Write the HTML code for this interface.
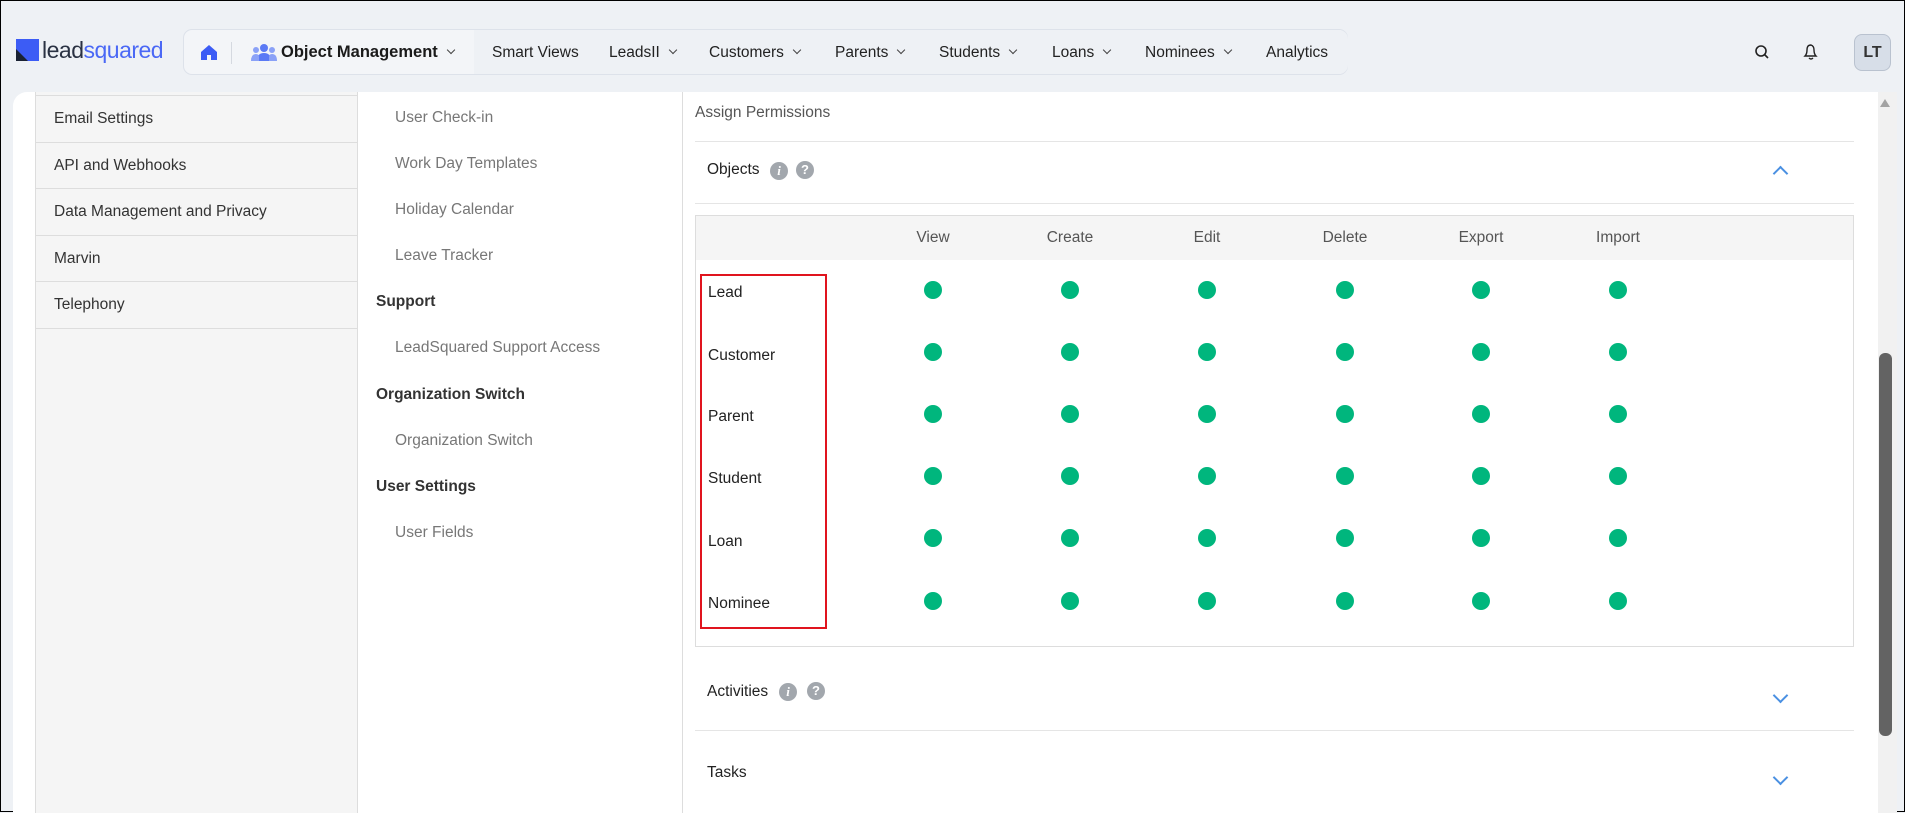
<!DOCTYPE html>
<html><head><meta charset="utf-8"><style>
*{box-sizing:border-box;margin:0;padding:0}
body{width:1905px;height:812px;overflow:hidden;background:#eef1f5;font-family:"Liberation Sans",sans-serif;position:relative;border:1px solid #000}
.abs{position:absolute}
.nav{left:182px;top:28px;width:1165px;height:46px;border:1px solid #dde2ea;border-radius:9px;background:#f3f5f8}
.ni{position:absolute;top:14px;font-size:15.5px;color:#222;white-space:nowrap}
.chev{display:inline-block;width:6px;height:6px;border-right:1.5px solid #444;border-bottom:1.5px solid #444;transform:rotate(45deg);margin-left:10px;position:relative;top:-4px}
.panel{left:12px;top:91px;width:1884px;height:721px;background:#fff;border-radius:14px 0 0 0}
.lc{left:34px;top:91px;width:323px;height:721px;background:#f5f5f5;border-left:1px solid #ddd;border-right:1px solid #ddd}
.li{position:absolute;left:0;width:321px;height:46.5px;border-bottom:1px solid #ddd;font-size:15.5px;color:#333;padding:14px 0 0 18px}
.mi{position:absolute;font-size:15.5px;color:#777}
.mh{position:absolute;font-size:15.5px;color:#333;font-weight:bold;left:375px}
.mid{left:357px;top:91px;width:325px;height:721px;border-right:1px solid #ddd}
.hd{position:absolute;font-size:15.5px;color:#555;text-align:center;width:100px;top:228px}
.rl{position:absolute;left:707px;font-size:15.5px;color:#222}
.dot{position:absolute;width:18px;height:18px;border-radius:50%;background:#00b67d}
.ic{position:absolute;width:18px;height:18px;border-radius:50%;background:#a2a7ad;color:#fff;font-size:13px;font-weight:bold;text-align:center;line-height:18px}
.ch{position:absolute;width:11px;height:11px;border-left:2px solid #4a90e2;border-top:2px solid #4a90e2}
</style></head><body>
<div class="abs" style="left:15px;top:38px;width:23px;height:22px;background:#3c5cf5"></div>
<div class="abs" style="left:15px;top:48px;width:0;height:0;border-left:12px solid #1a2233;border-top:12px solid transparent"></div>
<div class="abs" style="left:41px;top:36px;font-size:23px;letter-spacing:-0.5px;color:#2a3243">lead<span style="color:#4a68f5">squared</span></div>
<div class="abs nav">
 <svg class="abs" style="left:16px;top:14px" width="18" height="17" viewBox="0 0 18 17"><path d="M9 1 L17 8 V16 H11 V11 H7 V16 H1 V8 Z" fill="#3c5cf5"/></svg>
 <div class="abs" style="left:47px;top:12px;width:1px;height:22px;background:#d5d9e0"></div>
 <svg class="abs" style="left:67px;top:13px" width="26" height="19" viewBox="0 0 26 19"><circle cx="13" cy="5" r="4" fill="#5b7af5"/><circle cx="5" cy="7" r="3" fill="#8aa1f7"/><circle cx="21" cy="7" r="3" fill="#8aa1f7"/><path d="M6 18 Q6 10 13 10 Q20 10 20 18Z" fill="#5b7af5"/><path d="M0 18 Q0 11 5 11 Q8 11 8 14 V18Z M26 18 Q26 11 21 11 Q18 11 18 14 V18Z" fill="#8aa1f7"/></svg>
 <div class="ni" style="left:97px;font-weight:bold;font-size:16.5px;top:13px;color:#1a1a1a">Object Management<span class="chev"></span></div>
 <div class="abs" style="left:290px;top:0;width:874px;height:44px;background:#eef1f5;border-radius:0 9px 9px 0"></div>
 <div class="ni" style="left:308px">Smart Views</div>
 <div class="ni" style="left:425px">LeadsII<span class="chev"></span></div>
 <div class="ni" style="left:525px">Customers<span class="chev"></span></div>
 <div class="ni" style="left:651px">Parents<span class="chev"></span></div>
 <div class="ni" style="left:755px">Students<span class="chev"></span></div>
 <div class="ni" style="left:868px">Loans<span class="chev"></span></div>
 <div class="ni" style="left:961px">Nominees<span class="chev"></span></div>
 <div class="ni" style="left:1082px">Analytics</div>
</div>
<svg class="abs" style="left:1753px;top:43px" width="16" height="16" viewBox="0 0 16 16"><circle cx="7" cy="7" r="5" fill="none" stroke="#222" stroke-width="1.6"/><path d="M11 11 L14 14" stroke="#222" stroke-width="1.6"/></svg>
<svg class="abs" style="left:1801px;top:42px" width="16" height="18" viewBox="0 0 16 18"><path d="M3 13 Q5 11 5 7 Q5 2 9 2 Q12 3 12 7 Q12 11 14 13 Z M7 15 Q9 17 11 15" fill="none" stroke="#222" stroke-width="1.4"/></svg>
<div class="abs" style="left:1853px;top:33px;width:37px;height:37px;border:1px solid #b9c2cf;border-radius:8px;background:#d7dee8;font-size:16px;font-weight:bold;color:#333;text-align:center;line-height:35px">LT</div>

<div class="abs panel"></div>
<div class="abs lc">
 <div class="li" style="top:4px">Email Settings</div>
 <div class="li" style="top:50.5px">API and Webhooks</div>
 <div class="li" style="top:97px">Data Management and Privacy</div>
 <div class="li" style="top:143.5px">Marvin</div>
 <div class="li" style="top:190px">Telephony</div>
 <div style="position:absolute;left:0;top:3px;width:321px;border-top:1px solid #ddd"></div>
</div>
<div class="abs mid"></div>
<div class="mi" style="left:394px;top:108px">User Check-in</div>
<div class="mi" style="left:394px;top:154px">Work Day Templates</div>
<div class="mi" style="left:394px;top:200px">Holiday Calendar</div>
<div class="mi" style="left:394px;top:246px">Leave Tracker</div>
<div class="mh" style="top:292px">Support</div>
<div class="mi" style="left:394px;top:338px">LeadSquared Support Access</div>
<div class="mh" style="top:385px">Organization Switch</div>
<div class="mi" style="left:394px;top:431px">Organization Switch</div>
<div class="mh" style="top:477px">User Settings</div>
<div class="mi" style="left:394px;top:523px">User Fields</div>

<div class="abs" style="left:694px;top:103px;font-size:15.5px;color:#555">Assign Permissions</div>
<div class="abs" style="left:694px;top:140px;width:1159px;border-top:1px solid #e5e5e5"></div>
<div class="abs" style="left:706px;top:160px;font-size:15.5px;color:#222">Objects</div>
<div class="ic" style="left:769px;top:161px;font-style:italic;font-family:'Liberation Serif',serif">i</div>
<div class="ic" style="left:795px;top:160px">?</div>
<div class="ch" style="left:1774px;top:167px;transform:rotate(45deg)"></div>
<div class="abs" style="left:694px;top:202px;width:1159px;border-top:1px solid #e5e5e5"></div>
<div class="abs" style="left:694px;top:214px;width:1159px;height:432px;border:1px solid #ddd"></div>
<div class="abs" style="left:695px;top:215px;width:1157px;height:44px;background:#f5f5f5"></div>
<div class="hd" style="left:882px">View</div>
<div class="hd" style="left:1019px">Create</div>
<div class="hd" style="left:1156px">Edit</div>
<div class="hd" style="left:1294px">Delete</div>
<div class="hd" style="left:1430px">Export</div>
<div class="hd" style="left:1567px">Import</div>
<div class="abs" style="left:699px;top:273px;width:127px;height:355px;border:2px solid #e0141e"></div>
<div class="rl" style="top:283px">Lead</div>
<div class="rl" style="top:346px">Customer</div>
<div class="rl" style="top:407px">Parent</div>
<div class="rl" style="top:469px">Student</div>
<div class="rl" style="top:532px">Loan</div>
<div class="rl" style="top:594px">Nominee</div>
<div id="dots"></div>
<div class="abs" style="left:706px;top:682px;font-size:15.5px;color:#222">Activities</div>
<div class="ic" style="left:778px;top:682px;font-style:italic;font-family:'Liberation Serif',serif">i</div>
<div class="ic" style="left:806px;top:681px">?</div>
<div class="ch" style="left:1774px;top:689px;transform:rotate(225deg)"></div>
<div class="abs" style="left:694px;top:729px;width:1159px;border-top:1px solid #e5e5e5"></div>
<div class="abs" style="left:706px;top:763px;font-size:15.5px;color:#222">Tasks</div>
<div class="ch" style="left:1774px;top:771px;transform:rotate(225deg)"></div>

<div class="abs" style="left:1877px;top:91px;width:19px;height:721px;background:#f1f1f1"></div>
<div class="abs" style="left:1879px;top:98px;width:0;height:0;border-left:5px solid transparent;border-right:5px solid transparent;border-bottom:8px solid #a3a3a3"></div>
<div class="abs" style="left:1878px;top:352px;width:13px;height:383px;background:#636363;border-radius:6px"></div>
<script>
var d='',cx=[932,1069,1206,1344,1480,1617],cy=[289,351,413,475,537,600];
cy.forEach(function(y){cx.forEach(function(x){d+='<div class="dot" style="left:'+(x-9)+'px;top:'+(y-9)+'px"></div>'})});
document.getElementById('dots').innerHTML=d;
</script>
</body></html>
